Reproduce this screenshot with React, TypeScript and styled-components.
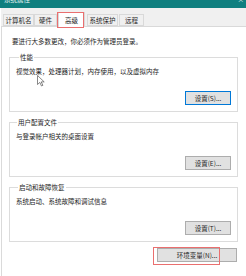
import React from 'react'
import styled, { createGlobalStyle } from 'styled-components'

const GlobalStyle = createGlobalStyle`
  html, body {
    margin: 0;
    padding: 0;
    background: #ffffff;
  }
  body {
    font-family: "Noto Sans CJK SC", "Noto Sans", sans-serif;
  }
`

const Window = styled.div`
  position: relative;
  width: 246px;
  height: 276px;
  overflow: hidden;
  background: #ffffff;
  font-size: 6.5px;
  color: #1e1e1e;
`

const TitleBar = styled.div`
  height: 8px;
  background: #0f7f7f;
  color: #e8f4f4;
  overflow: hidden;
  display: flex;
  justify-content: space-between;
  padding: 0 2px 0 4px;
  box-sizing: border-box;
`

const TitleText = styled.span`
  line-height: 8px;
  margin-top: -5px;
`

const TabStrip = styled.div`
  height: 19px;
  background: #f0f0f0;
  border-bottom: 1px solid #d9d9d9;
  box-sizing: border-box;
  display: flex;
  align-items: flex-end;
  padding-left: 2px;
  margin-left: 1px;
`

const Tab = styled.div<{ $w: number; $ml?: number; $active?: boolean }>`
  width: ${({ $w }) => $w}px;
  margin-left: ${({ $ml }) => $ml || 0}px;
  height: ${({ $active }) => ($active ? 15 : 12)}px;
  margin-bottom: ${({ $active }) => ($active ? -1 : 0)}px;
  box-sizing: border-box;
  border: 1px solid #d9d9d9;
  border-bottom: ${({ $active }) => ($active ? 'none' : '1px solid #d9d9d9')};
  background: ${({ $active }) => ($active ? '#ffffff' : '#f0f0f0')};
  display: flex;
  align-items: center;
  justify-content: center;
  line-height: 9px;
  white-space: nowrap;
`

const Body = styled.div`
  margin-left: 1px;
  border-left: 1px solid #dadada;
  height: 250px;
  padding: 10px 8px 0 7px;
  box-sizing: border-box;
`

const Notice = styled.div`
  line-height: 9px;
  padding-left: 3px;
  margin-bottom: 7px;
`

const Group = styled.fieldset`
  margin: 0 0 6px 0;
  padding: 6px 6px 6px 6px;
  border: 1px solid #dcdcdc;
  min-width: 0;
  display: flex;
  flex-direction: column;
`

const Legend = styled.legend<{ $ml?: number }>`
  padding: 0 1px;
  margin-left: ${({ $ml }) => $ml || 2}px;
  line-height: 8px;
  height: 8px;
`

const GroupText = styled.div`
  line-height: 9px;
`

const ButtonRow = styled.div<{ $mt?: number; $mr?: number }>`
  display: flex;
  justify-content: flex-end;
  margin-top: ${({ $mt }) => $mt || 0}px;
  margin-right: ${({ $mr }) => $mr || 0}px;
`

const Button = styled.div<{ $w: number; $focused?: boolean }>`
  width: ${({ $w }) => $w}px;
  height: 14px;
  box-sizing: border-box;
  background: #e1e1e1;
  border: 1px solid ${({ $focused }) => ($focused ? '#0078d7' : '#adadad')};
  display: flex;
  align-items: center;
  justify-content: center;
  line-height: 9px;
  white-space: nowrap;
`

const Highlight = styled.div<{ $x: number; $y: number; $w: number; $h: number }>`
  position: absolute;
  left: ${({ $x }) => $x}px;
  top: ${({ $y }) => $y}px;
  width: ${({ $w }) => $w}px;
  height: ${({ $h }) => $h}px;
  box-sizing: border-box;
  border: 1px solid #ea6f6f;
  pointer-events: none;
`

const Cursor = styled.svg`
  position: absolute;
  left: 37px;
  top: 75px;
`

const groups = [
  { title: '性能', ml: 3, text: '视觉效果，处理器计划，内存使用，以及虚拟内存', button: '设置(S)...', focused: true },
  { title: '用户配置文件', ml: 1, text: '与登录帐户相关的桌面设置', button: '设置(E)...' },
  { title: '启动和故障恢复', ml: 2, text: '系统启动、系统故障和调试信息', button: '设置(T)...' },
]

export default function App() {
  return (
    <>
      <GlobalStyle />
      <Window>
        <TitleBar>
          <TitleText>系统属性</TitleText>
          <TitleText>×</TitleText>
        </TitleBar>
        <TabStrip>
          <Tab $w={31}>计算机名</Tab>
          <Tab $w={23}>硬件</Tab>
          <Tab $w={27} $ml={1} $active>高级</Tab>
          <Tab $w={31} $ml={2}>系统保护</Tab>
          <Tab $w={25} $ml={1}>远程</Tab>
        </TabStrip>
        <Body>
          <Notice>要进行大多数更改，你必须作为管理员登录。</Notice>
          {groups.map((g) => (
            <Group key={g.title}>
              <Legend $ml={g.ml}>{g.title}</Legend>
              <GroupText>{g.text}</GroupText>
              <ButtonRow $mt={15}>
                <Button $w={46} $focused={g.focused}>{g.button}</Button>
              </ButtonRow>
            </Group>
          ))}
          <ButtonRow $mt={4} $mr={1}>
            <Button $w={80}>环境变量(N)...</Button>
          </ButtonRow>
        </Body>
        <Highlight $x={57} $y={12} $w={27} $h={16} />
        <Highlight $x={153} $y={247} $w={67} $h={18} />
        <Cursor width="8" height="12" viewBox="0 0 8 12">
          <path d="M0.5 0.5 L0.5 9.5 L2.8 7.4 L4.5 11 L5.9 10.3 L4.2 6.9 L7.2 6.9 Z" fill="#ffffff" stroke="#555" strokeWidth="0.7" />
        </Cursor>
      </Window>
    </>
  )
}
